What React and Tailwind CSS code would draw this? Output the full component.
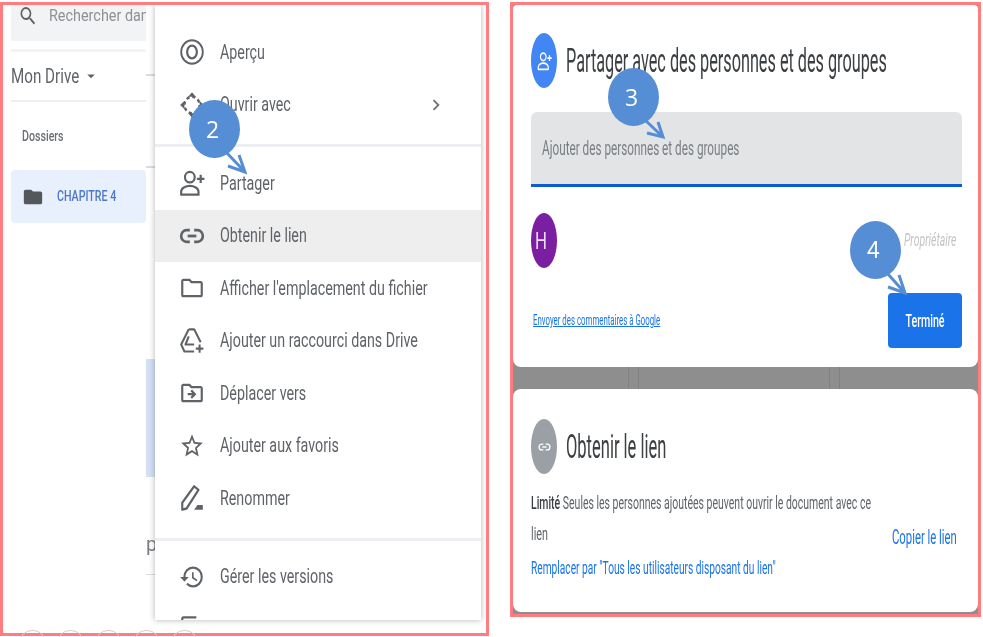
import {
  MdArrowDropDown,
  MdChevronRight,
  MdFolder,
  MdHistory,
  MdOutlineDriveFileMove,
  MdOutlineFileCopy,
  MdOutlineFolder,
  MdOutlineSettings,
  MdSearch,
  MdStarBorder,
} from "react-icons/md";

const PreviewIcon = (props) => (
  <svg viewBox="0 0 24 24" fill="none" stroke="currentColor" strokeWidth="1.7" preserveAspectRatio="none" {...props}>
    <circle cx="12" cy="12" r="10" />
    <ellipse cx="12" cy="12" rx="4.5" ry="5.5" strokeWidth="2" />
  </svg>
);

const OpenWithIcon = (props) => (
  <svg viewBox="0 0 24 24" fill="none" stroke="currentColor" strokeWidth="2.2" preserveAspectRatio="none" {...props}>
    <circle cx="12" cy="12" r="7" strokeDasharray="3 2.5" />
    <path d="M12 1l3.5 4h-7zM12 23l3.5-4h-7zM1 12l4-3.5v7zM23 12l-4-3.5v7z" fill="currentColor" stroke="none" />
  </svg>
);

const PersonAddIcon = (props) => (
  <svg viewBox="0 0 24 24" fill="none" stroke="currentColor" strokeWidth="2" preserveAspectRatio="none" {...props}>
    <circle cx="10" cy="7" r="4.5" />
    <path d="M2 22v-2.5C2 16.500 6 14.500 10 14.500s8 2 8 5V22z" strokeLinejoin="round" />
    <path d="M20 5v7M16.500 8.500h7" />
  </svg>
);

const LinkIcon = (props) => (
  <svg viewBox="0 0 24 24" fill="none" stroke="currentColor" strokeWidth="2.4" preserveAspectRatio="none" {...props}>
    <path d="M10 7H7a5 5 0 0 0 0 10h3" />
    <path d="M14 7h3a5 5 0 0 1 0 10h-3" />
    <path d="M8 12h8" />
  </svg>
);

const DriveAddIcon = (props) => (
  <svg viewBox="0 0 24 24" fill="none" stroke="currentColor" strokeWidth="1.9" preserveAspectRatio="none" {...props}>
    <path d="M9 2h5l6 11M9 2L2 15l3 6h9M9 8l-3 7h8" strokeLinejoin="round" />
    <path d="M19 15v7M15.500 18.500h7" />
  </svg>
);

const RenameIcon = (props) => (
  <svg viewBox="0 0 24 24" fill="none" stroke="currentColor" strokeWidth="2" preserveAspectRatio="none" {...props}>
    <path d="M3 22v-6L14 2l4 3L7 21z" strokeLinejoin="round" />
    <path d="M14 22h8v-4h-5z" fill="currentColor" stroke="none" />
  </svg>
);

const menuTop = [
  { icon: PreviewIcon, label: "Aperçu" },
  { icon: OpenWithIcon, label: "Ouvrir avec", chevron: true },
];

const menuMiddle = [
  { icon: PersonAddIcon, label: "Partager" },
  { icon: LinkIcon, label: "Obtenir le lien", active: true },
  { icon: MdOutlineFolder, label: "Afficher l'emplacement du fichier" },
  { icon: DriveAddIcon, label: "Ajouter un raccourci dans Drive" },
  { icon: MdOutlineDriveFileMove, label: "Déplacer vers" },
  { icon: MdStarBorder, label: "Ajouter aux favoris" },
  { icon: RenameIcon, label: "Renommer" },
];

// The capture is stretched vertically, so text is squeezed on x
const Squeezed = ({ className = "", children }) => (
  <span className={`inline-block origin-left whitespace-nowrap ${className}`}>{children}</span>
);

const MenuRow = ({ item }) => {
  const Icon = item.icon;
  return (
    <div className={`flex h-[52.5px] shrink-0 items-center pl-[24px] text-[#5f6368] ${item.active ? "bg-[#eeeeee]" : ""}`}>
      <Icon className="h-[28px] w-[26px] shrink-0" preserveAspectRatio="none" />
      <Squeezed className="ml-[15px] scale-x-[0.68] text-[21px] text-[#5f6368]">{item.label}</Squeezed>
      {item.chevron ? <MdChevronRight className="ml-auto mr-[34px] h-[22px] w-[22px] text-[#6f7378]" /> : null}
    </div>
  );
};

const Callout = ({ position, number, arrow, numberClass = "" }) => (
  <div className={`absolute h-[78px] w-[60px] ${position}`}>
    <div className={`flex h-[58px] w-[51px] items-center justify-center rounded-[50%] bg-[#558ed5] pr-[4px] text-[23px] text-white ${numberClass}`}>
      {number}
    </div>
    <svg className="absolute left-0 top-0 overflow-visible" width="60" height="78" fill="none" stroke="#558ed5" strokeWidth="3">
      <path d={arrow} />
    </svg>
  </div>
);

const LeftPanel = () => (
  <div className="mt-[2px] flex h-[634px] w-[489px] shrink-0 overflow-hidden border-[3px] border-[#ff7c80] bg-white font-['Roboto',sans-serif]">
    <div className="ml-[8px] w-[135px] shrink-0">
      <div className="flex h-[36px] items-start overflow-hidden bg-[#f1f3f4] pl-[7px]">
        <MdSearch className="-mt-[1px] h-[24px] w-[20px] shrink-0 text-[#5f6368]" preserveAspectRatio="none" />
        <Squeezed className="ml-[11px] scale-x-[0.9] text-[16px] leading-[22px] text-[#8d9196]">Rechercher dans Drive</Squeezed>
      </div>
      <div className="mt-[8px] h-[3px] bg-[#f1f3f4]" />
      <div className="flex h-[50px] items-center border-b-2 border-[#eceef0] text-[#5f6368]">
        <Squeezed className="scale-x-[0.76] text-[20px]">Mon Drive</Squeezed>
        <MdArrowDropDown className="-ml-[19px] h-[18px] w-[18px] shrink-0" />
      </div>
      <div className="flex h-[68px] items-center pl-[11px]">
        <Squeezed className="scale-x-[0.76] text-[14px] font-medium text-[#6b6f74]">Dossiers</Squeezed>
      </div>
      <div className="flex h-[53px] items-center rounded-sm bg-[#e8f0fe] pl-[11px]">
        <MdFolder className="h-[24px] w-[22px] shrink-0 text-[#54575c]" />
        <Squeezed className="ml-[13px] scale-x-[0.76] text-[14px] font-medium text-[#4a76c8]">CHAPITRE 4</Squeezed>
      </div>
    </div>

    <div className="flex w-[9px] shrink-0 flex-col overflow-hidden">
      <div className="mt-[69px] h-[2px] bg-[#dadce0]" />
      <div className="mt-[90px] h-[2px] bg-[#dadce0]" />
      <div className="mt-[191px] h-[118px] bg-[#d3e0f5]" />
      <div className="mt-[55px] text-[20px] leading-[24px] text-[#7b7f84]">p</div>
      <div className="mt-[18px] h-[1px] bg-[#dadce0]" />
    </div>

    <div className="flex h-[615px] w-[326px] shrink-0 flex-col overflow-hidden bg-white shadow-[0_0_6px_rgba(0,0,0,0.3)]">
      <div className="shrink-0 pt-[21px]">
        {menuTop.map((item) => (
          <MenuRow key={item.label} item={item} />
        ))}
      </div>
      <div className="mt-[13px] h-[3px] shrink-0 bg-[#eceef1]" />
      <div className="mt-[10px] shrink-0">
        {menuMiddle.map((item) => (
          <MenuRow key={item.label} item={item} />
        ))}
      </div>
      <div className="mt-[13px] h-[3px] shrink-0 bg-[#eceef1]" />
      <div className="mt-[10px] shrink-0">
        <MenuRow item={{ icon: MdHistory, label: "Gérer les versions" }} />
        <MenuRow item={{ icon: MdOutlineFileCopy, label: "Créer une copie" }} />
      </div>
    </div>
  </div>
);

const RightPanel = () => (
  <div className="ml-[21px] mt-[2px] flex h-[615px] w-[471px] shrink-0 flex-col border-[3px] border-[#ff7c80] bg-[#8e8e8e] font-['Roboto',sans-serif]">
    <div className="h-[362px] shrink-0 rounded-b-lg rounded-t-sm bg-white pl-[18px] pr-[16px] pt-[28px]">
      <div className="flex h-[55px] items-center">
        <div className="flex h-[55px] w-[26px] shrink-0 items-center justify-center rounded-[50%] bg-[#4285f4]">
          <PersonAddIcon className="h-[20px] w-[15px] text-white" />
        </div>
        <Squeezed className="ml-[9px] -mr-[200px] scale-x-[0.492] text-[33px] text-[#3c4043]">Partager avec des personnes et des groupes</Squeezed>
        <MdOutlineSettings className="ml-auto h-[32px] w-[22px] shrink-0 text-[#5f6368]" preserveAspectRatio="none" />
      </div>
      <div className="mt-[24px] flex h-[75px] items-center rounded-t-md border-b-[3px] border-[#0b5ed0] bg-[#e3e4e6] pl-[11px]">
        <Squeezed className="scale-x-[0.587] text-[20px] text-[#7a7e83]">Ajouter des personnes et des groupes</Squeezed>
      </div>
      <div className="mt-[26px] flex h-[55px] items-center justify-between pr-[6px]">
        <div className="flex h-[55px] w-[26px] items-center justify-center rounded-[50%] bg-[#7b1fa2] text-[#ecdcf2]">
          <Squeezed className="origin-center scale-x-[0.7] text-[24px]">H</Squeezed>
        </div>
        <span className="inline-block origin-right scale-x-[0.55] whitespace-nowrap text-[19px] italic text-[#c4c4c4]">Propriétaire</span>
      </div>
      <div className="mt-[25px] flex h-[55px] items-center justify-between">
        <a className="ml-[2px] inline-block origin-left scale-x-[0.56] whitespace-nowrap text-[14px] text-[#1a73e8] underline">
          Envoyer des commentaires à Google
        </a>
        <button className="flex h-[55px] w-[74px] items-center justify-center rounded bg-[#1a73e8] text-white">
          <span className="inline-block scale-x-[0.59] whitespace-nowrap text-[18px] font-medium">Terminé</span>
        </button>
      </div>
    </div>

    <div className="flex h-[22px] shrink-0 gap-[190px] pl-[115px]">
      <div className="h-full w-[11px] border-x border-[#818181]" />
      <div className="h-full w-[11px] border-x border-[#818181]" />
    </div>

    <div className="h-[223px] shrink-0 rounded-lg bg-white pl-[18px] pr-[16px] pt-[30px]">
      <div className="flex h-[55px] items-center">
        <div className="flex h-[55px] w-[26px] shrink-0 items-center justify-center rounded-[50%] bg-[#9aa0a6]">
          <LinkIcon className="h-[14px] w-[13px] text-white" />
        </div>
        <Squeezed className="ml-[9px] scale-x-[0.5] text-[33px] text-[#3c4043]">Obtenir le lien</Squeezed>
      </div>
      <div className="mt-[13px] flex items-center">
        <div className="w-[361px] shrink-0 text-[#5f6368]">
          <div className="flex h-[31px] items-center">
            <Squeezed className="scale-x-[0.582] text-[18px]">
              <b className="font-medium text-[#3c4043]">Limité</b> Seules les personnes ajoutées peuvent ouvrir le document avec ce
            </Squeezed>
          </div>
          <div className="flex h-[31px] items-center">
            <Squeezed className="scale-x-[0.6] text-[18px]">lien</Squeezed>
          </div>
          <div className="flex h-[37px] items-center">
            <Squeezed className="scale-x-[0.566] text-[18px] text-[#1a73e8]">Remplacer par "Tous les utilisateurs disposant du lien"</Squeezed>
          </div>
        </div>
        <Squeezed className="scale-x-[0.565] text-[20px] text-[#1a73e8]">Copier le lien</Squeezed>
      </div>
    </div>
  </div>
);

const App = () => (
  <div className="relative flex h-[637px] w-[983px] items-start overflow-hidden bg-white blur-[0.4px]">
    <LeftPanel />
    <RightPanel />

    <Callout position="left-[189px] top-[100px]" number="2" numberClass="font-['Open_Sans',sans-serif]" arrow="M37 52 L56 72 M39 66 L56 72 L50 55" />
    <Callout position="left-[608px] top-[68px]" number="3" numberClass="font-['Open_Sans',sans-serif]" arrow="M37 52 L55 69 M39 65 L55 69 L50 54" />
    <Callout position="left-[850px] top-[221px]" number="4" numberClass="font-['Liberation_Sans',sans-serif]" arrow="M37 52 L55 72 M38 66 L55 72 L49 54" />

    {/* slide toolbar peeking out under the left panel */}
    <div className="absolute bottom-[-19px] left-[19px] flex gap-[11px]">
      {[0, 1, 2, 3, 4].map((n) => (
        <div key={n} className="h-[26px] w-[27px] rounded-full border border-[#d0d0d0]" />
      ))}
    </div>
  </div>
);

export default App;
